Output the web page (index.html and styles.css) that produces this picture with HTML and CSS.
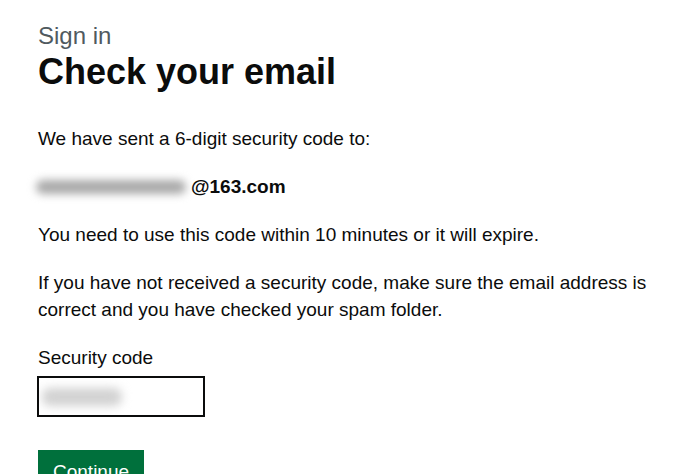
FILE: index.html
```html
<!DOCTYPE html>
<html lang="en">
<head>
<meta charset="utf-8">
<title>Check your email</title>
<link rel="stylesheet" href="styles.css">
</head>
<body>
<main class="page">
  <span class="caption">Sign in</span>
  <h1 class="heading">Check your email</h1>
  <p class="body">We have sent a 6-digit security code to:</p>
  <p class="body email"><span class="blur-name"></span><span class="email-end">@163.com</span></p>
  <p class="body">You need to use this code within 10 minutes or it will expire.</p>
  <p class="body">If you have not received a security code, make sure the email address is correct and you have checked your spam folder.</p>
  <div class="form-group">
    <label class="label" for="code">Security code</label>
    <div class="input" id="code"><span class="blur-code"></span></div>
  </div>
  <button class="button" type="button">Continue</button>
</main>
</body>
</html>
```
FILE: styles.css
```css
html, body {
  margin: 0;
  padding: 0;
  background: #ffffff;
}
body {
  font-family: "Liberation Sans", Arial, sans-serif;
  color: #0b0c0c;
}
.page {
  display: flex;
  flex-direction: column;
  align-items: flex-start;
  padding: 21px 20px 0 38px;
  width: 620px;
}
.caption {
  display: block;
  font-size: 24px;
  line-height: 30px;
  color: #505a5f;
  margin-bottom: 1px;
}
.heading {
  margin: 0 0 33px 0;
  font-size: 36px;
  line-height: 40px;
  font-weight: 700;
}
.body {
  margin: 0 0 21px 0;
  font-size: 19px;
  line-height: 27px;
}
.email {
  display: flex;
  align-items: center;
  font-weight: 700;
}
.blur-name {
  display: inline-block;
  width: 150px;
  height: 14px;
  margin-left: -2px;
  margin-right: 5px;
  background: #a9a9a9;
  border-radius: 7px;
  filter: blur(4px);
}
.email-end {
  display: inline-block;
}
.form-group {
  display: flex;
  flex-direction: column;
  margin-bottom: 33px;
}
.label {
  font-size: 19px;
  line-height: 27px;
  margin-bottom: 5px;
}
.input {
  box-sizing: border-box;
  width: 168px;
  height: 41px;
  border: 2px solid #0b0c0c;
  margin-left: -1px;
  display: flex;
  align-items: center;
  padding-left: 3px;
  overflow: hidden;
}
.blur-code {
  display: inline-block;
  width: 80px;
  height: 18px;
  background: #d2d2d2;
  border-radius: 8px;
  filter: blur(5px);
}
.button {
  font-family: "Liberation Sans", Arial, sans-serif;
  font-size: 19px;
  line-height: 23px;
  color: #ffffff;
  background: #00703c;
  border: 2px solid transparent;
  border-radius: 0;
  padding: 8px 13px 7px;
  box-shadow: 0 2px 0 #002d18;
  cursor: pointer;
}
```
